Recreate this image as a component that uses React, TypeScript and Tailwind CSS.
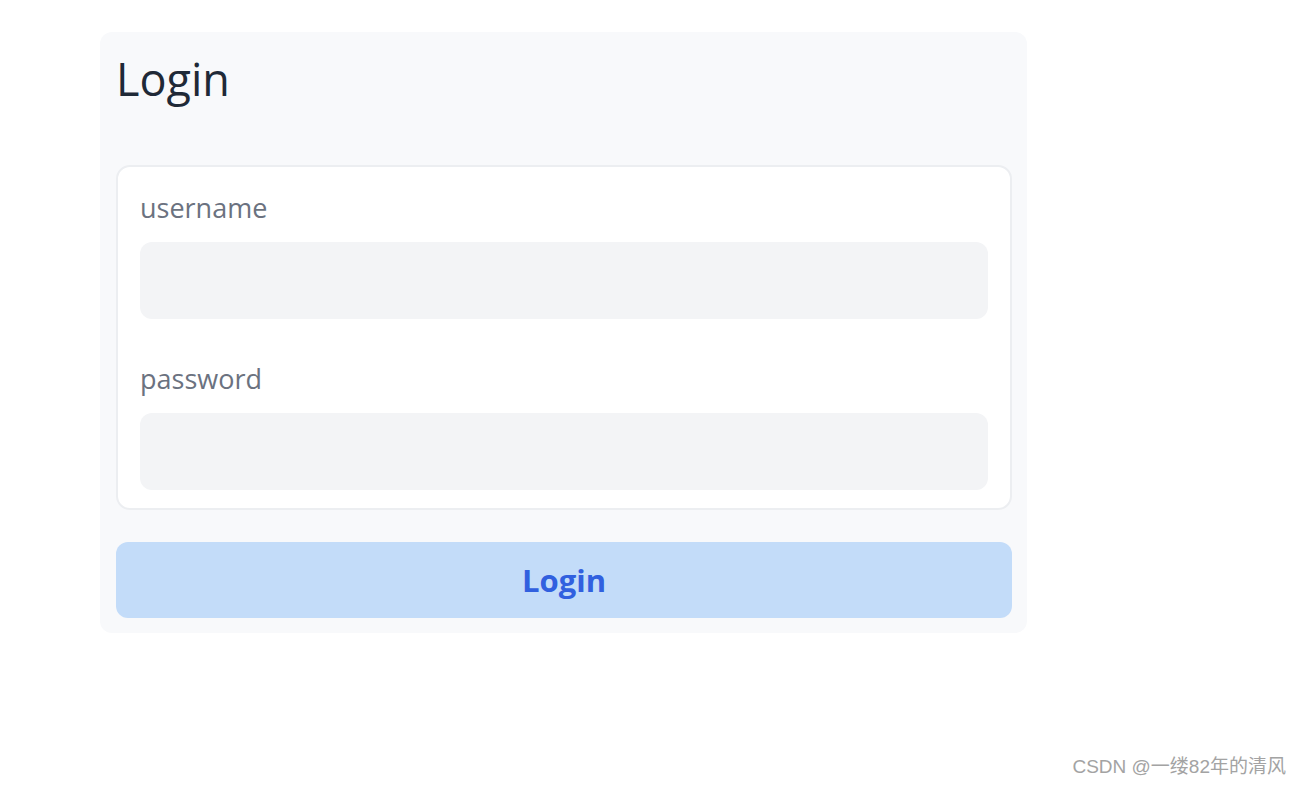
import { useState } from "react";

export default function App() {
  const [username, setUsername] = useState("");
  const [password, setPassword] = useState("");

  return (
    <div
      className="relative min-h-screen bg-white pl-[100px] pt-[32px]"
      style={{ fontFamily: '"Open Sans", "Noto Sans", sans-serif' }}
    >
      <div className="w-[927px] rounded-xl bg-[#f8f9fb] pl-4 pr-[15px] pt-[17px] pb-[15px]">
        <h1 className="mb-[56px] text-[45px] leading-[60px] text-[#1f2937]">Login</h1>

        <div className="rounded-[14px] border-2 border-[#eceef1] bg-white px-[22px] pt-[23px] pb-[18px]">
          <label className="mb-[16px] block text-[27px] leading-[36px] text-[#6b7280]">username</label>
          <input
            type="text"
            value={username}
            onChange={(e) => setUsername(e.target.value)}
            className="block h-[77px] w-full rounded-xl bg-[#f3f4f6] px-4 text-[24px] outline-none"
          />

          <label className="mt-[42px] mb-[16px] block text-[27px] leading-[36px] text-[#6b7280]">password</label>
          <input
            type="password"
            value={password}
            onChange={(e) => setPassword(e.target.value)}
            className="block h-[77px] w-full rounded-xl bg-[#f3f4f6] px-4 text-[24px] outline-none"
          />
        </div>

        <button
          type="button"
          className="mt-[32px] flex h-[76px] w-full items-center justify-center rounded-xl bg-[#c3dcf9] text-[31px] font-bold text-[#3160df]"
        >
          Login
        </button>
      </div>

      <div
        className="absolute right-[16px] bottom-[5px] text-[19px] text-[#a3a3a3]"
        style={{ fontFamily: '"Liberation Sans", "Noto Sans CJK SC", sans-serif' }}
      >
        CSDN @一缕82年的清风
      </div>
    </div>
  );
}
